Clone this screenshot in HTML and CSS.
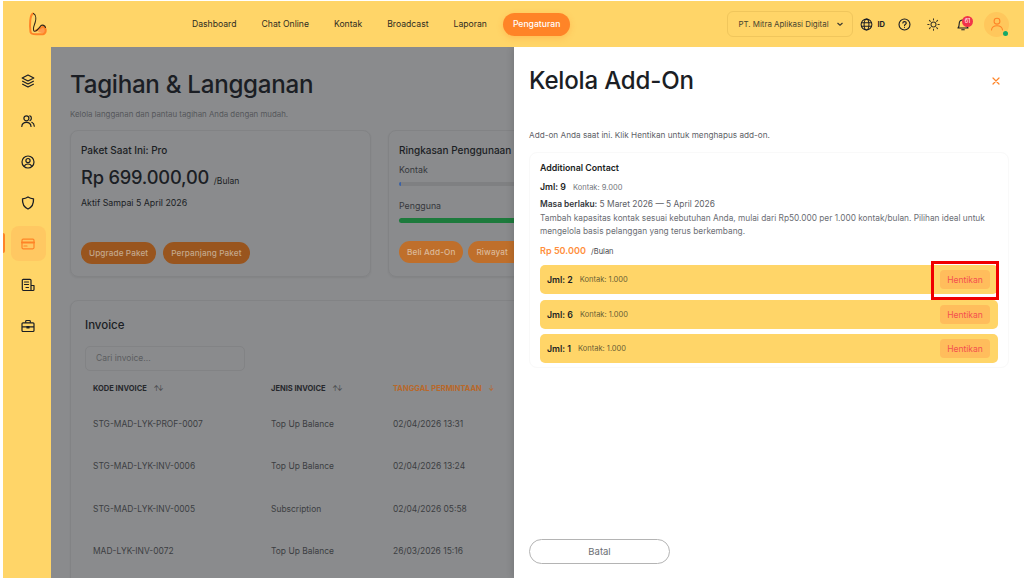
FILE: index.html
```html
<!DOCTYPE html>
<html lang="id">
<head>
  <meta charset="UTF-8" />
  <meta name="viewport" content="width=device-width, initial-scale=1.0"/>
  <title>Tagihan & Langganan</title>
  <link rel="stylesheet" href="styles.css">
</head>
<body>
  <div class="app">
    <header class="topbar">
      <div class="logo">
        <svg width="20" height="24" viewBox="0 0 20 24" fill="none" stroke-linecap="round" stroke-linejoin="round">
          <path d="M10 20C12 16 14 13.500 16 14.500C18.500 15.500 18.500 20 16 21.500Z" fill="#ff9c4e"/>
          <path d="M5 1.500C2 3 1.500 12 2.500 20C3 22 6 22.500 10 22.200L15 22.200C18 21.500 18.800 17 16 15C13.500 14 11 17.500 8 18.500" stroke="#ff8427" stroke-width="2"/>
          <path d="M5.500 1.500C8.500 3 8 8 7 11C6 14 4.500 17 6 19C8 20.500 11 16 13 13.500C14.500 12.500 17 13.500 17.500 15.500" stroke="#30261a" stroke-width="1.100"/>
        </svg>
      </div>
      <nav class="nav">
        <a>Dashboard</a>
        <a>Chat Online</a>
        <a>Kontak</a>
        <a>Broadcast</a>
        <a>Laporan</a>
        <a class="nav-active">Pengaturan</a>
      </nav>
      <div class="top-right">
        <div class="company">
          <span>PT. Mitra Aplikasi Digital</span>
          <svg width="8" height="8" viewBox="0 0 8 8" fill="none" stroke="#3c3a30" stroke-width="1.200"><path d="M1.500 3l2.500 2.300L6.500 3"/></svg>
        </div>
        <div class="lang">
          <svg width="13" height="13" viewBox="0 0 14 14" fill="none" stroke="#1b1e24" stroke-width="1.100"><circle cx="7" cy="7" r="5.800"/><ellipse cx="7" cy="7" rx="2.600" ry="5.800"/><path d="M1.300 5h11.400M1.300 9h11.400"/></svg>
          <b>ID</b>
        </div>
        <svg class="top-help" width="13" height="13" viewBox="0 0 14 14" fill="none" stroke="#1b1e24" stroke-width="1.200" stroke-linecap="round"><circle cx="7" cy="7" r="5.900"/><path d="M5.200 5.400C5.300 3.300 8.900 3.400 8.900 5.400C8.900 6.800 7 6.800 7 8.300M7 10.200v.1"/></svg>
        <svg class="top-sun" width="13" height="13" viewBox="0 0 14 14" fill="none" stroke="#3a3628" stroke-width="1.100" stroke-linecap="round"><circle cx="7" cy="7" r="2.700"/><path d="M7 .8v1.400M7 11.800v1.400M.8 7h1.400M11.800 7h1.400M2.600 2.600l1 1M10.400 10.400l1 1M2.600 11.400l1-1M10.400 3.600l1-1"/></svg>
        <div class="bell">
          <svg width="12" height="13" viewBox="0 0 12 13" fill="none" stroke="#1b1e24" stroke-width="1.100" stroke-linecap="round" stroke-linejoin="round"><path d="M1 10h10C9.800 8.800 9.800 7.500 9.800 5.800C9.800 3.500 8.200 2 6 2S2.200 3.500 2.200 5.800C2.200 7.500 2.200 8.800 1 10ZM4.700 11.800h2.600"/></svg>
          <span class="bell-badge">61</span>
        </div>
        <div class="avatar">
          <svg width="14" height="14" viewBox="0 0 14 14" fill="none" stroke="#ff8427" stroke-width="1.100" stroke-linecap="round"><circle cx="7" cy="4.200" r="2.900"/><path d="M1.500 13C1.800 10.200 4 8.800 7 8.800S12.200 10.200 12.500 13"/></svg>
          <span class="avatar-dot"></span>
        </div>
      </div>
    </header>

    <div class="body-row">
      <aside class="sidebar">
        <span class="side-item">
          <svg width="14" height="14" viewBox="0 0 14 14" fill="none" stroke="#1b1e24" stroke-width="1.200" stroke-linejoin="round"><path d="M7 1L1.200 4 7 7l5.800-3L7 1ZM1.200 7L7 10l5.800-3M1.200 10L7 13l5.800-3"/></svg>
        </span>
        <span class="side-item">
          <svg width="14" height="14" viewBox="0 0 14 14" fill="none" stroke="#1b1e24" stroke-width="1.200" stroke-linecap="round"><circle cx="5.400" cy="4.300" r="2.500"/><path d="M.8 12.500C1 9.800 2.800 8.400 5.400 8.400S9.800 9.800 10 12.500M8.800 1.900C10.700 2.100 11 5.800 9 6.600M10.800 8.300C12.400 9 13.200 10.500 13.300 12.200"/></svg>
        </span>
        <span class="side-item">
          <svg width="14" height="14" viewBox="0 0 14 14" fill="none" stroke="#1b1e24" stroke-width="1.200"><circle cx="7" cy="7" r="6"/><circle cx="7" cy="5.600" r="2.100"/><path d="M3.200 11.500C3.800 9.700 5.200 9 7 9S10.200 9.700 10.800 11.500"/></svg>
        </span>
        <span class="side-item">
          <svg width="14" height="14" viewBox="0 0 14 14" fill="none" stroke="#1b1e24" stroke-width="1.300" stroke-linejoin="round"><path d="M7 1c1.500 1 3.500 1.700 5.500 1.800C12.800 7.800 11 11.300 7 13 3 11.300 1.200 7.800 1.500 2.800 3.500 2.700 5.500 2 7 1Z"/></svg>
        </span>
        <span class="side-item side-active">
          <svg width="14" height="14" viewBox="0 0 14 14" fill="none" stroke="#ff8427" stroke-width="1.200" stroke-linecap="round"><rect x="1" y="2.200" width="12" height="9.600" rx="1.200"/><path d="M1 5.400h12" stroke-width="2"/><path d="M3 9h3"/></svg>
        </span>
        <span class="side-item">
          <svg width="14" height="14" viewBox="0 0 14 14" fill="none" stroke="#1b1e24" stroke-width="1.200" stroke-linecap="round" stroke-linejoin="round"><path d="M10 12.500H2.500C1.800 12.500 1.300 12 1.300 11.300V2.200C1.300 1.700 1.700 1.300 2.200 1.300H9C9.500 1.300 10 1.700 10 2.200V12.500ZM10 7.500H13V11.500C13 12.100 12.500 12.500 12 12.500H10M3.500 4h4M3.500 6.500h4M5 9.500h2.500"/></svg>
        </span>
        <span class="side-item">
          <svg width="14" height="14" viewBox="0 0 14 14" fill="none" stroke="#1b1e24" stroke-width="1.200" stroke-linejoin="round"><rect x="1" y="3.800" width="12" height="8.700" rx="1"/><path d="M4.700 3.800V2.300C4.700 1.800 5 1.500 5.500 1.500h3c.5 0 .8.300.8.800v1.500M1 7.800h12"/><path d="M6 7v2h2V7" fill="#1b1e24"/></svg>
        </span>
      </aside>

      <main class="main">
        <div class="page">
          <h1 class="page-title">Tagihan &amp; Langganan</h1>
          <p class="page-sub">Kelola langganan dan pantau tagihan Anda dengan mudah.</p>

          <div class="card-row">
            <section class="card">
              <h3 class="card-title">Paket Saat Ini: Pro</h3>
              <div class="price">Rp 699.000,00 <small>/Bulan</small></div>
              <p class="active-until">Aktif Sampai 5 April 2026</p>
              <div class="btn-row">
                <a class="btn-dim">Upgrade Paket</a>
                <a class="btn-dim">Perpanjang Paket</a>
              </div>
            </section>
            <section class="card">
              <h3 class="card-title">Ringkasan Penggunaan</h3>
              <p class="usage-label">Kontak</p>
              <div class="track"><div class="fill-blue"></div></div>
              <p class="usage-label usage-second">Pengguna</p>
              <div class="track track-green"></div>
              <div class="btn-row btn-row-usage">
                <a class="btn-dim btn-bright">Beli Add-On</a>
                <a class="btn-dim btn-bright btn-cut">Riwayat</a>
              </div>
            </section>
          </div>

          <section class="card invoice">
            <h3 class="invoice-title">Invoice</h3>
            <div class="search">Cari invoice...</div>
            <div class="table">
              <div class="th">KODE INVOICE <i>↑↓</i></div>
              <div class="th">JENIS INVOICE <i>↑↓</i></div>
              <div class="th th-sorted">TANGGAL PERMINTAAN <i>↓</i></div>

              <div class="td">STG-MAD-LYK-PROF-0007</div>
              <div class="td">Top Up Balance</div>
              <div class="td">02/04/2026 13:31</div>

              <div class="td">STG-MAD-LYK-INV-0006</div>
              <div class="td">Top Up Balance</div>
              <div class="td">02/04/2026 13:24</div>

              <div class="td">STG-MAD-LYK-INV-0005</div>
              <div class="td">Subscription</div>
              <div class="td">02/04/2026 05:58</div>

              <div class="td">MAD-LYK-INV-0072</div>
              <div class="td">Top Up Balance</div>
              <div class="td">26/03/2026 15:16</div>
            </div>
          </section>
        </div>

        <!-- drawer over the dimmed page -->
        <div class="drawer">
          <div class="drawer-head">
            <h2>Kelola Add-On</h2>
            <svg width="8" height="8" viewBox="0 0 8 8" fill="none" stroke="#ff8427" stroke-width="1.200" stroke-linecap="round"><path d="M1 1l6 6M7 1L1 7"/></svg>
          </div>
          <p class="drawer-desc">Add-on Anda saat ini. Klik Hentikan untuk menghapus add-on.</p>

          <div class="addon-card">
            <h4>Additional Contact</h4>
            <div class="addon-qty"><b>Jml: 9</b><span>Kontak: 9.000</span></div>
            <p class="addon-period"><b>Masa berlaku:</b> 5 Maret 2026 — 5 April 2026</p>
            <p class="addon-text">Tambah kapasitas kontak sesuai kebutuhan Anda, mulai dari Rp50.000 per 1.000 kontak/bulan. Pilihan ideal untuk mengelola basis pelanggan yang terus berkembang.</p>
            <div class="addon-price"><strong>Rp 50.000</strong><span>/Bulan</span></div>

            <div class="addon-list">
              <div class="addon-row">
                <b>Jml: 2</b><span>Kontak: 1.000</span>
                <a class="stop">Hentikan</a>
                <div class="highlight"></div>
              </div>
              <div class="addon-row">
                <b>Jml: 6</b><span>Kontak: 1.000</span>
                <a class="stop">Hentikan</a>
              </div>
              <div class="addon-row">
                <b>Jml: 1</b><span>Kontak: 1.000</span>
                <a class="stop">Hentikan</a>
              </div>
            </div>
          </div>

          <a class="cancel">Batal</a>
        </div>
      </main>
    </div>
  </div>
</body>
</html>
```

FILE: styles.css
```css
* {
  box-sizing: border-box;
}
html, body {
  margin: 0;
  height: 100%;
}
body {
  font-family: 'Inter', 'Liberation Sans', sans-serif;
  background: #fff;
  color: #1b1e24;
  padding: 1px 0 0 3px;
  overflow: hidden;
}
h1, h2, h3, h4, p {
  margin: 0;
}
.app {
  height: 577px;
  display: flex;
  flex-direction: column;
}

/* top bar */
.topbar {
  height: 46px;
  flex: none;
  background: #ffd568;
  display: flex;
  align-items: center;
  position: relative;
}
.logo {
  margin-left: 25px;
  display: flex;
}
.nav {
  display: flex;
  align-items: center;
  gap: 25px;
  margin-left: 144px;
  font-size: 8.65px;
  color: #2f2c22;
}
.nav-active {
  background: #ff8427;
  color: #fff;
  border-radius: 12px;
  line-height: 11px;
  padding: 6px 10px;
  margin-left: -9px;
  font-weight: 500;
  box-shadow: 0 2px 6px rgba(255, 132, 39, 0.3);
}
.top-right {
  margin-left: auto;
  display: flex;
  align-items: center;
}
.company {
  width: 126px;
  height: 26px;
  border: 1px solid #f0c65c;
  border-radius: 6px;
  display: flex;
  align-items: center;
  justify-content: space-between;
  padding: 0 8px 0 10px;
  font-size: 7.9px;
  color: #47442f;
}
.lang {
  display: flex;
  align-items: center;
  gap: 4px;
  margin-left: 7px;
  font-size: 7.5px;
}
.top-help {
  margin-left: 13px;
}
.top-sun {
  margin-left: 16px;
}
.bell {
  position: relative;
  display: flex;
  margin-left: 17px;
}
.bell-badge {
  position: absolute;
  top: -2px;
  right: -4px;
  width: 11px;
  height: 11px;
  border-radius: 50%;
  background: #f0344a;
  color: #fff;
  font-size: 5.500px;
  line-height: 11px;
  text-align: center;
}
.avatar {
  position: relative;
  width: 25px;
  height: 25px;
  border-radius: 50%;
  background: #ffc75c;
  margin: 0 15px 0 15px;
  display: flex;
  align-items: center;
  justify-content: center;
}
.avatar-dot {
  position: absolute;
  right: 1px;
  bottom: 1px;
  width: 5px;
  height: 5px;
  border-radius: 50%;
  background: #15a868;
}

/* side menu */
.body-row {
  flex: 1;
  display: flex;
  min-height: 0;
}
.sidebar {
  width: 48px;
  flex: none;
  background: #ffd568;
  display: flex;
  flex-direction: column;
  align-items: center;
  padding: 16px 0 0 2px;
  gap: 5.850px;
}
.side-item {
  width: 35px;
  height: 35px;
  display: flex;
  align-items: center;
  justify-content: center;
  border-radius: 8px;
  position: relative;
}
.side-active {
  background: #ffc862;
}
.side-active::before {
  content: "";
  position: absolute;
  left: -7.500px;
  top: 7px;
  width: 2px;
  height: 20px;
  background: #ff8427;
  border-radius: 0 2px 2px 0;
}

/* dimmed page behind the drawer */
.main {
  flex: 1;
  position: relative;
  overflow: hidden;
  background: #8a8b8d;
}
.page {
  width: 463px;
  height: 100%;
  overflow: hidden;
  padding: 22px 0 0 19px;
}
.page-title {
  font-size: 24.2px;
  font-weight: 500;
  line-height: 32px;
  letter-spacing: -0.3px;
  white-space: nowrap;
}
.page-sub {
  font-size: 7.85px;
  color: #55575b;
  margin-top: 7px;
  line-height: 12px;
  white-space: nowrap;
}
.card-row {
  display: flex;
  gap: 17px;
  margin-top: 10px;
  width: 700px;
}
.card {
  width: 301px;
  height: 147px;
  border: 1px solid #828385;
  border-radius: 8px;
  padding: 12px 10px;
  box-shadow: 0 1px 2px rgba(0, 0, 0, 0.06);
}
.card-title {
  font-size: 10px;
  font-weight: 500;
  line-height: 14px;
}
.price {
  font-size: 18.3px;
  font-weight: 500;
  margin-top: 7px;
  line-height: 26px;
  letter-spacing: -0.2px;
}
.price small {
  font-size: 8.5px;
  font-weight: 400;
  letter-spacing: 0;
}
.active-until {
  font-size: 8.8px;
  margin-top: 3px;
  line-height: 12px;
}
.btn-row {
  display: flex;
  gap: 7px;
  margin-top: 32.500px;
}
.btn-row-usage {
  gap: 5px;
  margin-top: 18px;
  white-space: nowrap;
}
.btn-dim {
  background: #99551e;
  color: #c4a88c;
  font-size: 8.2px;
  letter-spacing: 0.1px;
  font-weight: 500;
  line-height: 22px;
  border-radius: 12px;
  padding: 0 8px;
}
.btn-bright {
  background: #bf6f2b;
  color: #dbb999;
}
.btn-cut {
  width: 80px;
}
.usage-label {
  font-size: 8.8px;
  color: #36383c;
  margin-top: 7px;
  line-height: 12px;
}
.usage-second {
  margin-top: 14px;
}
.track {
  height: 4px;
  border-radius: 3px;
  background: #7f8082;
  margin-top: 6px;
  overflow: hidden;
}
.fill-blue {
  width: 2px;
  height: 100%;
  background: #3a62a8;
}
.track-green {
  height: 5px;
  background: #1d7a3c;
}
.invoice {
  width: 934px;
  height: 320px;
  margin-top: 23px;
  padding: 16px 14px;
}
.invoice-title {
  font-size: 11.5px;
  font-weight: 500;
  line-height: 16px;
}
.search {
  width: 160px;
  height: 25px;
  margin-top: 13px;
  border: 1px solid #828385;
  border-radius: 5px;
  padding-left: 10px;
  font-size: 8.5px;
  line-height: 23px;
  color: #5b5d60;
}
.table {
  display: grid;
  grid-template-columns: 178px 122px 1fr;
  margin-left: 8px;
}
.th {
  font-size: 7.5px;
  font-weight: 700;
  color: #26282c;
  line-height: 12px;
  padding-top: 12px;
}
.th i {
  font-style: normal;
  font-weight: 400;
  font-size: 7px;
  letter-spacing: -1.5px;
  margin-left: 5px;
  color: #45474a;
}
.th-sorted, .th-sorted i {
  color: #b9682a;
}
.td {
  font-size: 8.45px;
  color: #3c3e42;
  height: 42.400px;
  padding-top: 23px;
  line-height: 12px;
}

/* drawer */
.drawer {
  position: absolute;
  top: 0;
  right: 0;
  bottom: 0;
  width: 510px;
  background: #fff;
  padding: 18px 15px 14px;
  display: flex;
  flex-direction: column;
  box-shadow: -2px 0 6px rgba(0, 0, 0, 0.12);
}
.drawer-head {
  display: flex;
  align-items: center;
  justify-content: space-between;
  padding-right: 9px;
}
.drawer-head h2 {
  font-size: 24.1px;
  font-weight: 500;
  line-height: 32px;
  letter-spacing: -0.2px;
}
.drawer-desc {
  font-size: 8.2px;
  color: #5e6167;
  margin-top: 32px;
  line-height: 12px;
}
.addon-card {
  margin-top: 11px;
  border: 1px solid #f9f9f9;
  border-radius: 8px;
  padding: 9px 10px 0;
  height: 216px;
}
.addon-card h4 {
  font-size: 8.8px;
  font-weight: 600;
  line-height: 12px;
}
.addon-qty {
  display: flex;
  align-items: baseline;
  gap: 7px;
  margin-top: 7px;
  line-height: 12px;
}
.addon-qty b, .addon-row b {
  font-size: 8.8px;
  font-weight: 600;
}
.addon-qty span, .addon-row span {
  font-size: 7.5px;
  color: #74777d;
}
.addon-period {
  font-size: 8.4px;
  color: #5e6167;
  margin-top: 4px;
  line-height: 12px;
}
.addon-period b {
  font-weight: 600;
  color: #33363b;
}
.addon-text {
  font-size: 8.3px;
  color: #6b6e74;
  margin-top: 2px;
  line-height: 12.500px;
}
.addon-price {
  display: flex;
  align-items: baseline;
  gap: 5px;
  margin-top: 7px;
  line-height: 14px;
}
.addon-price strong {
  font-size: 9.1px;
  font-weight: 600;
  color: #ff8f3d;
}
.addon-price span {
  font-size: 7.5px;
  color: #44474c;
}
.addon-list {
  display: flex;
  flex-direction: column;
  gap: 5.500px;
  margin-top: 6px;
}
.addon-row {
  position: relative;
  height: 29px;
  background: #ffd568;
  border-radius: 5px;
  display: flex;
  align-items: center;
  gap: 7px;
  padding: 0 8px 0 7px;
}
.addon-row span {
  color: #6a5f35;
}
.stop {
  margin-left: auto;
  width: 50px;
  height: 19px;
  background: #ffbd5c;
  border-radius: 4px;
  color: #f4504f;
  font-size: 8.5px;
  line-height: 20px;
  text-align: center;
}
.highlight {
  position: absolute;
  top: -4px;
  right: -1px;
  width: 68px;
  height: 39px;
  border: 3px solid #f00000;
}
.cancel {
  margin-top: auto;
  width: 141px;
  height: 25px;
  border: 1px solid #b4b4b4;
  border-radius: 13px;
  font-size: 9.5px;
  line-height: 23px;
  text-align: center;
  color: #6b6e74;
}
```
